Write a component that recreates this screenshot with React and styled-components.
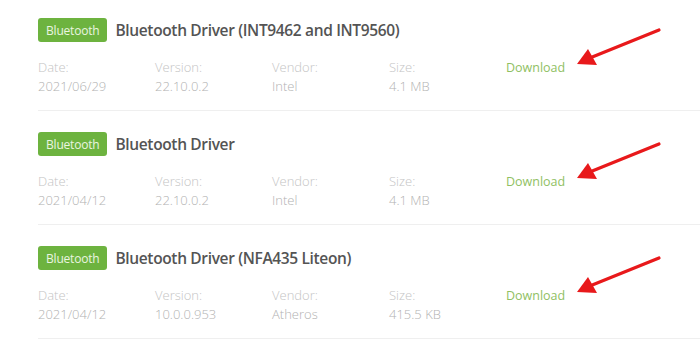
import styled, { createGlobalStyle } from "styled-components";

const GlobalStyle = createGlobalStyle`
  body {
    margin: 0;
    background: #fff;
    font-family: 'Open Sans', 'Noto Sans', sans-serif;
  }
`;

const List = styled.div`
  width: 700px;
  height: 344px;
  overflow: hidden;
  padding-left: 38px;
  box-sizing: border-box;
`;

const Item = styled.section`
  padding: 21px 0 14px;
  border-bottom: 1px solid #efefef;

  &:first-child {
    padding-top: 18px;
  }
`;

const Header = styled.div`
  display: flex;
  align-items: center;
  gap: 8px;
  height: 24px;
`;

const Badge = styled.span`
  display: inline-flex;
  align-items: center;
  height: 24px;
  padding: 0 8px;
  border-radius: 3px;
  background: #6db33f;
  color: #eaf5e0;
  font-size: 12px;
  letter-spacing: -0.2px;
`;

const Title = styled.h3`
  margin: 0;
  font-size: 15.5px;
  font-weight: 600;
  color: #545454;
  letter-spacing: -0.35px;
`;

const Meta = styled.div`
  position: relative;
  display: grid;
  grid-template-columns: repeat(5, 117px);
  margin-top: 16px;
  font-size: 13px;
  font-weight: 300;
  line-height: 19px;
`;

const Label = styled.div`
  color: #c4c4c4;
`;

const Value = styled.div`
  color: #b2b2b2;
`;

const Field = styled.div`
  display: flex;
  flex-direction: column;
`;

const DownloadLink = styled.a`
  color: #90bf63;
  font-weight: 400;
  text-decoration: none;
  font-size: 12.5px;
`;

const Arrow = styled.svg`
  position: absolute;
  left: 533px;
  top: -35px;
  overflow: visible;
`;

const RedArrow = () => (
  <Arrow width="95" height="50" viewBox="0 0 95 50">
    <line x1="88" y1="7" x2="20" y2="34.5" stroke="#e8191b" strokeWidth="3.2" strokeLinecap="round" />
    <polygon points="6,41 17,26 26,42" fill="#e8191b" />
  </Arrow>
);

const drivers = [
  { title: "Bluetooth Driver (INT9462 and INT9560)", date: "2021/06/29", version: "22.10.0.2", vendor: "Intel", size: "4.1 MB" },
  { title: "Bluetooth Driver", date: "2021/04/12", version: "22.10.0.2", vendor: "Intel", size: "4.1 MB" },
  { title: "Bluetooth Driver (NFA435 Liteon)", date: "2021/04/12", version: "10.0.0.953", vendor: "Atheros", size: "415.5 KB" },
];

const App = () => (
  <>
    <GlobalStyle />
    <List>
      {drivers.map((d, i) => (
        <Item key={i}>
          <Header>
            <Badge>Bluetooth</Badge>
            <Title>{d.title}</Title>
          </Header>
          <Meta>
            <Field>
              <Label>Date:</Label>
              <Value>{d.date}</Value>
            </Field>
            <Field>
              <Label>Version:</Label>
              <Value>{d.version}</Value>
            </Field>
            <Field>
              <Label>Vendor:</Label>
              <Value>{d.vendor}</Value>
            </Field>
            <Field>
              <Label>Size:</Label>
              <Value>{d.size}</Value>
            </Field>
            <Field>
              <DownloadLink href="#">Download</DownloadLink>
            </Field>
            <RedArrow />
          </Meta>
        </Item>
      ))}
    </List>
  </>
);

export default App;
